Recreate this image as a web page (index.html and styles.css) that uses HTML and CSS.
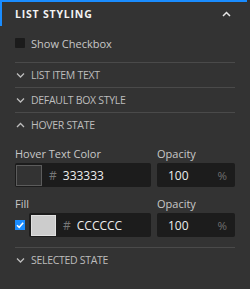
FILE: index.html
```html
<!DOCTYPE html>
<html>
<head>
<meta charset="utf-8">
<link rel="stylesheet" href="styles.css">
</head>
<body>
<div class="panel">
  <div class="head">
    <span class="head-title">LIST STYLING</span>
    <svg class="head-chev" width="9" height="6" viewBox="0 0 9 6"><path d="M1 5 L4.5 1.5 L8 5" fill="none" stroke="#e6e6e6" stroke-width="1.5"/></svg>
  </div>
  <div class="body">
    <div class="check-row">
      <span class="box"></span>
      <span class="check-label">Show Checkbox</span>
    </div>
    <div class="section">
      <svg class="chev" width="9" height="6" viewBox="0 0 9 6"><path d="M1 1.5 L4.5 5 L8 1.5" fill="none" stroke="#bdbdbd" stroke-width="1.3"/></svg>
      <span>LIST ITEM TEXT</span>
    </div>
    <div class="section">
      <svg class="chev" width="9" height="6" viewBox="0 0 9 6"><path d="M1 1.5 L4.5 5 L8 1.5" fill="none" stroke="#bdbdbd" stroke-width="1.3"/></svg>
      <span>DEFAULT BOX STYLE</span>
    </div>
    <div class="section">
      <svg class="chev" width="9" height="6" viewBox="0 0 9 6"><path d="M1 5 L4.5 1.5 L8 5" fill="none" stroke="#bdbdbd" stroke-width="1.3"/></svg>
      <span>HOVER STATE</span>
    </div>
    <div class="hover-body">
      <div class="grid">
        <div class="label">Hover Text Color</div>
        <div class="label">Opacity</div>
        <div class="field">
          <span class="swatch dark"></span>
          <span class="hash">#</span>
          <span class="val">333333</span>
        </div>
        <div class="field op">
          <span class="val">100</span>
          <span class="pct">%</span>
        </div>
      </div>
      <div class="grid second">
        <div class="label">Fill</div>
        <div class="label">Opacity</div>
        <div class="fill-cell">
          <span class="cbox">
            <svg width="10" height="10" viewBox="0 0 10 10"><path d="M2 5.2 L4.2 7.3 L8.2 2.8" fill="none" stroke="#fff" stroke-width="1.5"/></svg>
          </span>
          <div class="field grow">
            <span class="swatch light"></span>
            <span class="hash">#</span>
            <span class="val">CCCCCC</span>
          </div>
        </div>
        <div class="field op">
          <span class="val">100</span>
          <span class="pct">%</span>
        </div>
      </div>
    </div>
    <div class="section">
      <svg class="chev" width="9" height="6" viewBox="0 0 9 6"><path d="M1 1.5 L4.5 5 L8 1.5" fill="none" stroke="#bdbdbd" stroke-width="1.3"/></svg>
      <span>SELECTED STATE</span>
    </div>
  </div>
</div>
</body>
</html>
```

FILE: styles.css
```css
html, body {
  margin: 0;
  padding: 0;
  background: #333333;
  font-family: "Open Sans", "Liberation Sans", sans-serif;
  width: 250px;
  height: 289px;
  overflow: hidden;
}

.panel {
  width: 247px;
  border-top: 2px solid #1a8cff;
}

.head {
  height: 24px;
  border-left: 2px solid #1a8cff;
  padding: 0 16px 0 13px;
  display: flex;
  align-items: center;
  justify-content: space-between;
}

.head-title {
  color: #f2f2f2;
  font-size: 10.5px;
  font-weight: 700;
  letter-spacing: 0.8px;
}

.head-chev {
  display: block;
}

.body {
  width: 220px;
  padding: 0 0 0 15px;
}

.check-row {
  display: flex;
  align-items: center;
  height: 10px;
  margin-top: 12px;
  margin-bottom: 14px;
}

.box {
  width: 10px;
  height: 10px;
  background: #1b1b1b;
  border-radius: 1px;
}

.check-label {
  margin-left: 6px;
  color: #c8c8c8;
  font-size: 11px;
}

.section {
  border-top: 1px solid #4a4a4a;
  height: 24px;
  display: flex;
  align-items: center;
  color: #bdbdbd;
  font-size: 10.5px;
  letter-spacing: -0.3px;
}

.chev {
  display: block;
  margin: 0 6px 0 1px;
}

.hover-body {
  padding: 10px 0 10px 0;
}

.grid {
  display: grid;
  grid-template-columns: 136px 78px;
  column-gap: 6px;
  row-gap: 2px;
}

.grid.second {
  margin-top: 10px;
}

.label {
  color: #c8c8c8;
  font-size: 11px;
  line-height: 14px;
}

.field {
  height: 24px;
  background: #1c1c1c;
  border-radius: 2px;
  display: flex;
  align-items: center;
  box-sizing: border-box;
}

.swatch {
  width: 26px;
  height: 21px;
  box-sizing: border-box;
  margin-left: 1px;
  border: 1px solid #5c5c5c;
}

.swatch.dark {
  background: #333333;
}

.swatch.light {
  background: #cccccc;
  border-color: #e0e0e0;
  width: 25px;
  margin-left: 2px;
}

.hash {
  color: #777777;
  font-size: 12px;
  margin-left: 7px;
}

.val {
  color: #ededed;
  font-size: 12px;
  margin-left: 6px;
}

.op {
  padding: 0 8px 0 5px;
  justify-content: space-between;
}

.pct {
  color: #707070;
  font-size: 11.5px;
}

.fill-cell {
  display: flex;
  align-items: center;
}

.cbox {
  width: 10px;
  height: 10px;
  background: #1a8cff;
  display: flex;
  align-items: center;
  justify-content: center;
  margin-right: 4px;
  flex: none;
}

.cbox svg {
  display: block;
}

.grow {
  flex: 1;
}
```
